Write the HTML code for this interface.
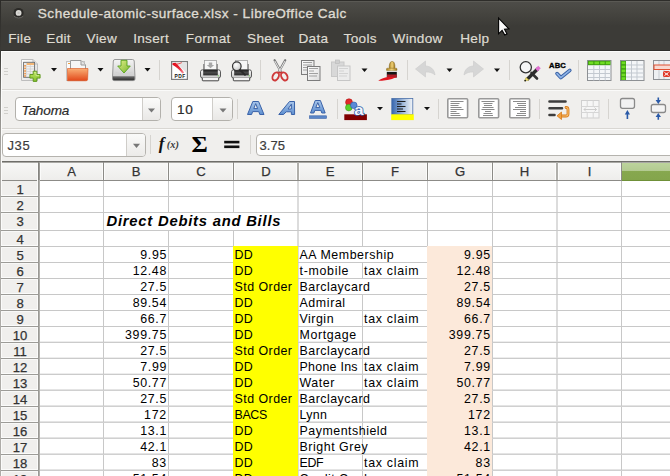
<!DOCTYPE html><html><head><meta charset="utf-8"><style>
*{margin:0;padding:0;box-sizing:border-box}
html,body{width:670px;height:476px;overflow:hidden;background:#f0efed;font-family:"Liberation Sans",sans-serif}
#root{position:relative;width:670px;height:476px;overflow:hidden}
.a{position:absolute}
.c{position:absolute;font-size:12.4px;line-height:0;white-space:nowrap;color:#000}
.ct{position:absolute;font-size:14.8px;font-weight:bold;font-style:italic;line-height:0;white-space:nowrap;color:#000;letter-spacing:0.77px}
.hd{position:absolute;font-size:13.1px;line-height:0;white-space:nowrap;color:#333;text-align:center;-webkit-text-stroke:0.25px}
.mn{position:absolute;font-size:13.6px;line-height:0;white-space:nowrap;color:#dfdbd2;letter-spacing:0.3px;-webkit-text-stroke:0.2px}
</style></head><body><div id="root">

<div class="a" style="left:0;top:0;width:670px;height:51px;background:linear-gradient(#4e4d49 1px,#45443f 14px,#3c3b37 26px,#3c3b37)"></div>
<div class="a" style="left:0;top:0;width:670px;height:1px;background:#2e2d2a"></div>
<div class="a" style="left:0;top:1px;width:670px;height:1px;background:#5a5954"></div>
<div class="a" style="left:0;top:50px;width:670px;height:1px;background:#2f2e2b"></div>
<div class="mn" style="left:37.8px;top:13.69px;letter-spacing:0.49px;-webkit-text-stroke:0.35px">Schedule-atomic-surface.xlsx - LibreOffice Calc</div>
<div class="mn" style="left:8.2px;top:39.49px">File</div>
<div class="mn" style="left:46.3px;top:39.49px">Edit</div>
<div class="mn" style="left:86.6px;top:39.49px">View</div>
<div class="mn" style="left:133.2px;top:39.49px">Insert</div>
<div class="mn" style="left:185.8px;top:39.49px">Format</div>
<div class="mn" style="left:247.1px;top:39.49px">Sheet</div>
<div class="mn" style="left:298.5px;top:39.49px">Data</div>
<div class="mn" style="left:343.6px;top:39.49px">Tools</div>
<div class="mn" style="left:392.5px;top:39.49px">Window</div>
<div class="mn" style="left:460.2px;top:39.49px">Help</div>
<div class="a" style="left:0;top:51px;width:670px;height:110px;background:#f0efed"></div>
<div class="a" style="left:1px;top:51px;width:669px;height:1px;background:#fbfbfa"></div>
<div style="position:absolute;left:0px;top:89px;width:670px;height:1px;background:#d9d7d3"></div>
<div style="position:absolute;left:0px;top:90px;width:670px;height:1px;background:#fafaf9"></div>
<div style="position:absolute;left:0px;top:128px;width:670px;height:1px;background:#d9d7d3"></div>
<div style="position:absolute;left:0px;top:129px;width:670px;height:1px;background:#fafaf9"></div>
<div class="a" style="left:2px;top:133px;width:144px;height:24px;border:1px solid #b5b3ae;border-radius:4px;background:#fff"></div>
<div class="a" style="left:126px;top:134px;width:19px;height:22px;border-left:1px solid #cfcdc9;border-radius:0 3px 3px 0;background:linear-gradient(#fafaf9,#ecebe9)"></div>
<div class="mn" style="left:7.4px;top:145.50px;color:#3c3c3c;font-size:13px;letter-spacing:0.7px">J35</div>
<div class="a" style="left:256px;top:134px;width:420px;height:22px;border:1px solid #b5b3ae;border-radius:4px;background:#fff"></div>
<div class="mn" style="left:259.5px;top:145.70px;color:#3c3c3c;font-size:13px;letter-spacing:0.1px">3.75</div>
<div style="position:absolute;left:0px;top:161px;width:670px;height:1px;background:#6f6e6a"></div>
<div style="position:absolute;left:0px;top:162px;width:670px;height:1px;background:#a9a8a4"></div>
<div class="a" style="left:0;top:163px;width:670px;height:17px;background:linear-gradient(#f7f7f6,#eeedeb)"></div>
<div class="a" style="left:0;top:181px;width:38px;height:295px;background:#f0efed"></div>
<div style="position:absolute;left:0px;top:180px;width:670px;height:1px;background:#8c8b87"></div>
<div style="position:absolute;left:38px;top:162px;width:1px;height:314px;background:#9a9995"></div>
<div style="position:absolute;left:39px;top:162px;width:1px;height:314px;background:#b2b1ad"></div>
<div style="position:absolute;left:37px;top:163px;width:1px;height:313px;background:#fbfbfa"></div>
<div class="a" style="left:0;top:0;width:1px;height:476px;background:linear-gradient(#2c2b28,#3c3b37 55px,#8a8985 100px,#aeaca8 160px,#aeaca8)"></div>
<div class="a" style="left:1px;top:51px;width:1px;height:425px;background:#fbfbfa"></div>
<div style="position:absolute;left:40px;top:181px;width:630px;height:295px;background:#fff"></div>
<div style="position:absolute;left:233px;top:246px;width:65px;height:230px;background:#ffff00"></div>
<div style="position:absolute;left:427px;top:246px;width:65px;height:230px;background:#fce9da"></div>
<div style="position:absolute;left:40px;top:196px;width:630px;height:1px;background:#c8c8c8"></div>
<div style="position:absolute;left:40px;top:212px;width:630px;height:1px;background:#c8c8c8"></div>
<div style="position:absolute;left:40px;top:230px;width:630px;height:1px;background:#c8c8c8"></div>
<div style="position:absolute;left:40px;top:246px;width:193px;height:1px;background:#c8c8c8"></div>
<div style="position:absolute;left:298px;top:246px;width:129px;height:1px;background:#c8c8c8"></div>
<div style="position:absolute;left:492px;top:246px;width:178px;height:1px;background:#c8c8c8"></div>
<div style="position:absolute;left:40px;top:262px;width:193px;height:1px;background:#c8c8c8"></div>
<div style="position:absolute;left:298px;top:262px;width:129px;height:1px;background:#c8c8c8"></div>
<div style="position:absolute;left:492px;top:262px;width:178px;height:1px;background:#c8c8c8"></div>
<div style="position:absolute;left:40px;top:278px;width:193px;height:1px;background:#c8c8c8"></div>
<div style="position:absolute;left:298px;top:278px;width:129px;height:1px;background:#c8c8c8"></div>
<div style="position:absolute;left:492px;top:278px;width:178px;height:1px;background:#c8c8c8"></div>
<div style="position:absolute;left:40px;top:294px;width:193px;height:1px;background:#c8c8c8"></div>
<div style="position:absolute;left:298px;top:294px;width:129px;height:1px;background:#c8c8c8"></div>
<div style="position:absolute;left:492px;top:294px;width:178px;height:1px;background:#c8c8c8"></div>
<div style="position:absolute;left:40px;top:310px;width:193px;height:1px;background:#c8c8c8"></div>
<div style="position:absolute;left:298px;top:310px;width:129px;height:1px;background:#c8c8c8"></div>
<div style="position:absolute;left:492px;top:310px;width:178px;height:1px;background:#c8c8c8"></div>
<div style="position:absolute;left:40px;top:326px;width:193px;height:1px;background:#c8c8c8"></div>
<div style="position:absolute;left:298px;top:326px;width:129px;height:1px;background:#c8c8c8"></div>
<div style="position:absolute;left:492px;top:326px;width:178px;height:1px;background:#c8c8c8"></div>
<div style="position:absolute;left:40px;top:341px;width:193px;height:1px;background:#ededed"></div>
<div style="position:absolute;left:40px;top:342px;width:193px;height:1px;background:#cbcbcb"></div>
<div style="position:absolute;left:298px;top:341px;width:129px;height:1px;background:#ededed"></div>
<div style="position:absolute;left:298px;top:342px;width:129px;height:1px;background:#cbcbcb"></div>
<div style="position:absolute;left:492px;top:341px;width:178px;height:1px;background:#ededed"></div>
<div style="position:absolute;left:492px;top:342px;width:178px;height:1px;background:#cbcbcb"></div>
<div style="position:absolute;left:40px;top:357px;width:193px;height:1px;background:#ededed"></div>
<div style="position:absolute;left:40px;top:358px;width:193px;height:1px;background:#cbcbcb"></div>
<div style="position:absolute;left:298px;top:357px;width:129px;height:1px;background:#ededed"></div>
<div style="position:absolute;left:298px;top:358px;width:129px;height:1px;background:#cbcbcb"></div>
<div style="position:absolute;left:492px;top:357px;width:178px;height:1px;background:#ededed"></div>
<div style="position:absolute;left:492px;top:358px;width:178px;height:1px;background:#cbcbcb"></div>
<div style="position:absolute;left:40px;top:373px;width:193px;height:1px;background:#ededed"></div>
<div style="position:absolute;left:40px;top:374px;width:193px;height:1px;background:#cbcbcb"></div>
<div style="position:absolute;left:298px;top:373px;width:129px;height:1px;background:#ededed"></div>
<div style="position:absolute;left:298px;top:374px;width:129px;height:1px;background:#cbcbcb"></div>
<div style="position:absolute;left:492px;top:373px;width:178px;height:1px;background:#ededed"></div>
<div style="position:absolute;left:492px;top:374px;width:178px;height:1px;background:#cbcbcb"></div>
<div style="position:absolute;left:40px;top:389px;width:193px;height:1px;background:#e4e4e4"></div>
<div style="position:absolute;left:40px;top:390px;width:193px;height:1px;background:#d0d0d0"></div>
<div style="position:absolute;left:298px;top:389px;width:129px;height:1px;background:#e4e4e4"></div>
<div style="position:absolute;left:298px;top:390px;width:129px;height:1px;background:#d0d0d0"></div>
<div style="position:absolute;left:492px;top:389px;width:178px;height:1px;background:#e4e4e4"></div>
<div style="position:absolute;left:492px;top:390px;width:178px;height:1px;background:#d0d0d0"></div>
<div style="position:absolute;left:40px;top:405px;width:193px;height:1px;background:#e4e4e4"></div>
<div style="position:absolute;left:40px;top:406px;width:193px;height:1px;background:#d0d0d0"></div>
<div style="position:absolute;left:298px;top:405px;width:129px;height:1px;background:#e4e4e4"></div>
<div style="position:absolute;left:298px;top:406px;width:129px;height:1px;background:#d0d0d0"></div>
<div style="position:absolute;left:492px;top:405px;width:178px;height:1px;background:#e4e4e4"></div>
<div style="position:absolute;left:492px;top:406px;width:178px;height:1px;background:#d0d0d0"></div>
<div style="position:absolute;left:40px;top:421px;width:193px;height:1px;background:#e4e4e4"></div>
<div style="position:absolute;left:40px;top:422px;width:193px;height:1px;background:#d0d0d0"></div>
<div style="position:absolute;left:298px;top:421px;width:129px;height:1px;background:#e4e4e4"></div>
<div style="position:absolute;left:298px;top:422px;width:129px;height:1px;background:#d0d0d0"></div>
<div style="position:absolute;left:492px;top:421px;width:178px;height:1px;background:#e4e4e4"></div>
<div style="position:absolute;left:492px;top:422px;width:178px;height:1px;background:#d0d0d0"></div>
<div style="position:absolute;left:40px;top:437px;width:193px;height:1px;background:#e4e4e4"></div>
<div style="position:absolute;left:40px;top:438px;width:193px;height:1px;background:#d0d0d0"></div>
<div style="position:absolute;left:298px;top:437px;width:129px;height:1px;background:#e4e4e4"></div>
<div style="position:absolute;left:298px;top:438px;width:129px;height:1px;background:#d0d0d0"></div>
<div style="position:absolute;left:492px;top:437px;width:178px;height:1px;background:#e4e4e4"></div>
<div style="position:absolute;left:492px;top:438px;width:178px;height:1px;background:#d0d0d0"></div>
<div style="position:absolute;left:40px;top:453px;width:193px;height:1px;background:#e4e4e4"></div>
<div style="position:absolute;left:40px;top:454px;width:193px;height:1px;background:#d0d0d0"></div>
<div style="position:absolute;left:298px;top:453px;width:129px;height:1px;background:#e4e4e4"></div>
<div style="position:absolute;left:298px;top:454px;width:129px;height:1px;background:#d0d0d0"></div>
<div style="position:absolute;left:492px;top:453px;width:178px;height:1px;background:#e4e4e4"></div>
<div style="position:absolute;left:492px;top:454px;width:178px;height:1px;background:#d0d0d0"></div>
<div style="position:absolute;left:40px;top:469px;width:193px;height:1px;background:#e4e4e4"></div>
<div style="position:absolute;left:40px;top:470px;width:193px;height:1px;background:#d0d0d0"></div>
<div style="position:absolute;left:298px;top:469px;width:129px;height:1px;background:#e4e4e4"></div>
<div style="position:absolute;left:298px;top:470px;width:129px;height:1px;background:#d0d0d0"></div>
<div style="position:absolute;left:492px;top:469px;width:178px;height:1px;background:#e4e4e4"></div>
<div style="position:absolute;left:492px;top:470px;width:178px;height:1px;background:#d0d0d0"></div>
<div style="position:absolute;left:103px;top:181px;width:1px;height:15px;background:#c8c8c8"></div>
<div style="position:absolute;left:103px;top:197px;width:1px;height:15px;background:#c8c8c8"></div>
<div style="position:absolute;left:103px;top:213px;width:1px;height:17px;background:#c8c8c8"></div>
<div style="position:absolute;left:103px;top:231px;width:1px;height:15px;background:#c8c8c8"></div>
<div style="position:absolute;left:103px;top:247px;width:1px;height:15px;background:#c8c8c8"></div>
<div style="position:absolute;left:103px;top:263px;width:1px;height:15px;background:#c8c8c8"></div>
<div style="position:absolute;left:103px;top:279px;width:1px;height:15px;background:#c8c8c8"></div>
<div style="position:absolute;left:103px;top:295px;width:1px;height:15px;background:#c8c8c8"></div>
<div style="position:absolute;left:103px;top:311px;width:1px;height:15px;background:#c8c8c8"></div>
<div style="position:absolute;left:103px;top:327px;width:1px;height:15px;background:#c8c8c8"></div>
<div style="position:absolute;left:103px;top:343px;width:1px;height:15px;background:#c8c8c8"></div>
<div style="position:absolute;left:103px;top:359px;width:1px;height:15px;background:#c8c8c8"></div>
<div style="position:absolute;left:103px;top:375px;width:1px;height:15px;background:#c8c8c8"></div>
<div style="position:absolute;left:103px;top:391px;width:1px;height:15px;background:#c8c8c8"></div>
<div style="position:absolute;left:103px;top:407px;width:1px;height:15px;background:#c8c8c8"></div>
<div style="position:absolute;left:103px;top:423px;width:1px;height:15px;background:#c8c8c8"></div>
<div style="position:absolute;left:103px;top:439px;width:1px;height:15px;background:#c8c8c8"></div>
<div style="position:absolute;left:103px;top:455px;width:1px;height:15px;background:#c8c8c8"></div>
<div style="position:absolute;left:103px;top:471px;width:1px;height:5px;background:#c8c8c8"></div>
<div style="position:absolute;left:168px;top:181px;width:1px;height:15px;background:#c8c8c8"></div>
<div style="position:absolute;left:168px;top:197px;width:1px;height:15px;background:#c8c8c8"></div>
<div style="position:absolute;left:168px;top:231px;width:1px;height:15px;background:#c8c8c8"></div>
<div style="position:absolute;left:168px;top:247px;width:1px;height:15px;background:#c8c8c8"></div>
<div style="position:absolute;left:168px;top:263px;width:1px;height:15px;background:#c8c8c8"></div>
<div style="position:absolute;left:168px;top:279px;width:1px;height:15px;background:#c8c8c8"></div>
<div style="position:absolute;left:168px;top:295px;width:1px;height:15px;background:#c8c8c8"></div>
<div style="position:absolute;left:168px;top:311px;width:1px;height:15px;background:#c8c8c8"></div>
<div style="position:absolute;left:168px;top:327px;width:1px;height:15px;background:#c8c8c8"></div>
<div style="position:absolute;left:168px;top:343px;width:1px;height:15px;background:#c8c8c8"></div>
<div style="position:absolute;left:168px;top:359px;width:1px;height:15px;background:#c8c8c8"></div>
<div style="position:absolute;left:168px;top:375px;width:1px;height:15px;background:#c8c8c8"></div>
<div style="position:absolute;left:168px;top:391px;width:1px;height:15px;background:#c8c8c8"></div>
<div style="position:absolute;left:168px;top:407px;width:1px;height:15px;background:#c8c8c8"></div>
<div style="position:absolute;left:168px;top:423px;width:1px;height:15px;background:#c8c8c8"></div>
<div style="position:absolute;left:168px;top:439px;width:1px;height:15px;background:#c8c8c8"></div>
<div style="position:absolute;left:168px;top:455px;width:1px;height:15px;background:#c8c8c8"></div>
<div style="position:absolute;left:168px;top:471px;width:1px;height:5px;background:#c8c8c8"></div>
<div style="position:absolute;left:233px;top:181px;width:1px;height:15px;background:#c8c8c8"></div>
<div style="position:absolute;left:233px;top:197px;width:1px;height:15px;background:#c8c8c8"></div>
<div style="position:absolute;left:233px;top:231px;width:1px;height:15px;background:#c8c8c8"></div>
<div style="position:absolute;left:297px;top:181px;width:1px;height:15px;background:#dcdcdc"></div>
<div style="position:absolute;left:298px;top:181px;width:1px;height:15px;background:#dcdcdc"></div>
<div style="position:absolute;left:297px;top:197px;width:1px;height:15px;background:#dcdcdc"></div>
<div style="position:absolute;left:298px;top:197px;width:1px;height:15px;background:#dcdcdc"></div>
<div style="position:absolute;left:297px;top:213px;width:1px;height:17px;background:#dcdcdc"></div>
<div style="position:absolute;left:298px;top:213px;width:1px;height:17px;background:#dcdcdc"></div>
<div style="position:absolute;left:297px;top:231px;width:1px;height:15px;background:#dcdcdc"></div>
<div style="position:absolute;left:298px;top:231px;width:1px;height:15px;background:#dcdcdc"></div>
<div style="position:absolute;left:298px;top:247px;width:1px;height:15px;background:#dcdcdc"></div>
<div style="position:absolute;left:298px;top:263px;width:1px;height:15px;background:#dcdcdc"></div>
<div style="position:absolute;left:298px;top:279px;width:1px;height:15px;background:#dcdcdc"></div>
<div style="position:absolute;left:298px;top:295px;width:1px;height:15px;background:#dcdcdc"></div>
<div style="position:absolute;left:298px;top:311px;width:1px;height:15px;background:#dcdcdc"></div>
<div style="position:absolute;left:298px;top:327px;width:1px;height:15px;background:#dcdcdc"></div>
<div style="position:absolute;left:298px;top:343px;width:1px;height:15px;background:#dcdcdc"></div>
<div style="position:absolute;left:298px;top:359px;width:1px;height:15px;background:#dcdcdc"></div>
<div style="position:absolute;left:298px;top:375px;width:1px;height:15px;background:#dcdcdc"></div>
<div style="position:absolute;left:298px;top:391px;width:1px;height:15px;background:#dcdcdc"></div>
<div style="position:absolute;left:298px;top:407px;width:1px;height:15px;background:#dcdcdc"></div>
<div style="position:absolute;left:298px;top:423px;width:1px;height:15px;background:#dcdcdc"></div>
<div style="position:absolute;left:298px;top:439px;width:1px;height:15px;background:#dcdcdc"></div>
<div style="position:absolute;left:298px;top:455px;width:1px;height:15px;background:#dcdcdc"></div>
<div style="position:absolute;left:298px;top:471px;width:1px;height:5px;background:#dcdcdc"></div>
<div style="position:absolute;left:362px;top:181px;width:1px;height:15px;background:#c8c8c8"></div>
<div style="position:absolute;left:362px;top:197px;width:1px;height:15px;background:#c8c8c8"></div>
<div style="position:absolute;left:362px;top:213px;width:1px;height:17px;background:#c8c8c8"></div>
<div style="position:absolute;left:362px;top:231px;width:1px;height:15px;background:#c8c8c8"></div>
<div style="position:absolute;left:362px;top:263px;width:1px;height:15px;background:#c8c8c8"></div>
<div style="position:absolute;left:362px;top:295px;width:1px;height:15px;background:#c8c8c8"></div>
<div style="position:absolute;left:362px;top:311px;width:1px;height:15px;background:#c8c8c8"></div>
<div style="position:absolute;left:362px;top:327px;width:1px;height:15px;background:#c8c8c8"></div>
<div style="position:absolute;left:362px;top:343px;width:1px;height:15px;background:#c8c8c8"></div>
<div style="position:absolute;left:362px;top:359px;width:1px;height:15px;background:#c8c8c8"></div>
<div style="position:absolute;left:362px;top:375px;width:1px;height:15px;background:#c8c8c8"></div>
<div style="position:absolute;left:362px;top:391px;width:1px;height:15px;background:#c8c8c8"></div>
<div style="position:absolute;left:362px;top:407px;width:1px;height:15px;background:#c8c8c8"></div>
<div style="position:absolute;left:362px;top:423px;width:1px;height:15px;background:#c8c8c8"></div>
<div style="position:absolute;left:362px;top:439px;width:1px;height:15px;background:#c8c8c8"></div>
<div style="position:absolute;left:362px;top:455px;width:1px;height:15px;background:#c8c8c8"></div>
<div style="position:absolute;left:362px;top:471px;width:1px;height:5px;background:#c8c8c8"></div>
<div style="position:absolute;left:427px;top:181px;width:1px;height:15px;background:#c8c8c8"></div>
<div style="position:absolute;left:427px;top:197px;width:1px;height:15px;background:#c8c8c8"></div>
<div style="position:absolute;left:427px;top:213px;width:1px;height:17px;background:#c8c8c8"></div>
<div style="position:absolute;left:427px;top:231px;width:1px;height:15px;background:#c8c8c8"></div>
<div style="position:absolute;left:492px;top:181px;width:1px;height:15px;background:#c8c8c8"></div>
<div style="position:absolute;left:492px;top:197px;width:1px;height:15px;background:#c8c8c8"></div>
<div style="position:absolute;left:492px;top:213px;width:1px;height:17px;background:#c8c8c8"></div>
<div style="position:absolute;left:492px;top:231px;width:1px;height:15px;background:#c8c8c8"></div>
<div style="position:absolute;left:492px;top:247px;width:1px;height:15px;background:#c8c8c8"></div>
<div style="position:absolute;left:492px;top:263px;width:1px;height:15px;background:#c8c8c8"></div>
<div style="position:absolute;left:492px;top:279px;width:1px;height:15px;background:#c8c8c8"></div>
<div style="position:absolute;left:492px;top:295px;width:1px;height:15px;background:#c8c8c8"></div>
<div style="position:absolute;left:492px;top:311px;width:1px;height:15px;background:#c8c8c8"></div>
<div style="position:absolute;left:492px;top:327px;width:1px;height:15px;background:#c8c8c8"></div>
<div style="position:absolute;left:492px;top:343px;width:1px;height:15px;background:#c8c8c8"></div>
<div style="position:absolute;left:492px;top:359px;width:1px;height:15px;background:#c8c8c8"></div>
<div style="position:absolute;left:492px;top:375px;width:1px;height:15px;background:#c8c8c8"></div>
<div style="position:absolute;left:492px;top:391px;width:1px;height:15px;background:#c8c8c8"></div>
<div style="position:absolute;left:492px;top:407px;width:1px;height:15px;background:#c8c8c8"></div>
<div style="position:absolute;left:492px;top:423px;width:1px;height:15px;background:#c8c8c8"></div>
<div style="position:absolute;left:492px;top:439px;width:1px;height:15px;background:#c8c8c8"></div>
<div style="position:absolute;left:492px;top:455px;width:1px;height:15px;background:#c8c8c8"></div>
<div style="position:absolute;left:492px;top:471px;width:1px;height:5px;background:#c8c8c8"></div>
<div style="position:absolute;left:556px;top:181px;width:1px;height:15px;background:#dcdcdc"></div>
<div style="position:absolute;left:557px;top:181px;width:1px;height:15px;background:#dcdcdc"></div>
<div style="position:absolute;left:556px;top:197px;width:1px;height:15px;background:#dcdcdc"></div>
<div style="position:absolute;left:557px;top:197px;width:1px;height:15px;background:#dcdcdc"></div>
<div style="position:absolute;left:556px;top:213px;width:1px;height:17px;background:#dcdcdc"></div>
<div style="position:absolute;left:557px;top:213px;width:1px;height:17px;background:#dcdcdc"></div>
<div style="position:absolute;left:556px;top:231px;width:1px;height:15px;background:#dcdcdc"></div>
<div style="position:absolute;left:557px;top:231px;width:1px;height:15px;background:#dcdcdc"></div>
<div style="position:absolute;left:556px;top:247px;width:1px;height:15px;background:#dcdcdc"></div>
<div style="position:absolute;left:557px;top:247px;width:1px;height:15px;background:#dcdcdc"></div>
<div style="position:absolute;left:556px;top:263px;width:1px;height:15px;background:#dcdcdc"></div>
<div style="position:absolute;left:557px;top:263px;width:1px;height:15px;background:#dcdcdc"></div>
<div style="position:absolute;left:556px;top:279px;width:1px;height:15px;background:#dcdcdc"></div>
<div style="position:absolute;left:557px;top:279px;width:1px;height:15px;background:#dcdcdc"></div>
<div style="position:absolute;left:556px;top:295px;width:1px;height:15px;background:#dcdcdc"></div>
<div style="position:absolute;left:557px;top:295px;width:1px;height:15px;background:#dcdcdc"></div>
<div style="position:absolute;left:556px;top:311px;width:1px;height:15px;background:#dcdcdc"></div>
<div style="position:absolute;left:557px;top:311px;width:1px;height:15px;background:#dcdcdc"></div>
<div style="position:absolute;left:556px;top:327px;width:1px;height:15px;background:#dcdcdc"></div>
<div style="position:absolute;left:557px;top:327px;width:1px;height:15px;background:#dcdcdc"></div>
<div style="position:absolute;left:556px;top:343px;width:1px;height:15px;background:#dcdcdc"></div>
<div style="position:absolute;left:557px;top:343px;width:1px;height:15px;background:#dcdcdc"></div>
<div style="position:absolute;left:556px;top:359px;width:1px;height:15px;background:#dcdcdc"></div>
<div style="position:absolute;left:557px;top:359px;width:1px;height:15px;background:#dcdcdc"></div>
<div style="position:absolute;left:556px;top:375px;width:1px;height:15px;background:#dcdcdc"></div>
<div style="position:absolute;left:557px;top:375px;width:1px;height:15px;background:#dcdcdc"></div>
<div style="position:absolute;left:556px;top:391px;width:1px;height:15px;background:#dcdcdc"></div>
<div style="position:absolute;left:557px;top:391px;width:1px;height:15px;background:#dcdcdc"></div>
<div style="position:absolute;left:556px;top:407px;width:1px;height:15px;background:#dcdcdc"></div>
<div style="position:absolute;left:557px;top:407px;width:1px;height:15px;background:#dcdcdc"></div>
<div style="position:absolute;left:556px;top:423px;width:1px;height:15px;background:#dcdcdc"></div>
<div style="position:absolute;left:557px;top:423px;width:1px;height:15px;background:#dcdcdc"></div>
<div style="position:absolute;left:556px;top:439px;width:1px;height:15px;background:#dcdcdc"></div>
<div style="position:absolute;left:557px;top:439px;width:1px;height:15px;background:#dcdcdc"></div>
<div style="position:absolute;left:556px;top:455px;width:1px;height:15px;background:#dcdcdc"></div>
<div style="position:absolute;left:557px;top:455px;width:1px;height:15px;background:#dcdcdc"></div>
<div style="position:absolute;left:556px;top:471px;width:1px;height:5px;background:#dcdcdc"></div>
<div style="position:absolute;left:557px;top:471px;width:1px;height:5px;background:#dcdcdc"></div>
<div style="position:absolute;left:621px;top:181px;width:1px;height:15px;background:#c8c8c8"></div>
<div style="position:absolute;left:621px;top:197px;width:1px;height:15px;background:#c8c8c8"></div>
<div style="position:absolute;left:621px;top:213px;width:1px;height:17px;background:#c8c8c8"></div>
<div style="position:absolute;left:621px;top:231px;width:1px;height:15px;background:#c8c8c8"></div>
<div style="position:absolute;left:621px;top:247px;width:1px;height:15px;background:#c8c8c8"></div>
<div style="position:absolute;left:621px;top:263px;width:1px;height:15px;background:#c8c8c8"></div>
<div style="position:absolute;left:621px;top:279px;width:1px;height:15px;background:#c8c8c8"></div>
<div style="position:absolute;left:621px;top:295px;width:1px;height:15px;background:#c8c8c8"></div>
<div style="position:absolute;left:621px;top:311px;width:1px;height:15px;background:#c8c8c8"></div>
<div style="position:absolute;left:621px;top:327px;width:1px;height:15px;background:#c8c8c8"></div>
<div style="position:absolute;left:621px;top:343px;width:1px;height:15px;background:#c8c8c8"></div>
<div style="position:absolute;left:621px;top:359px;width:1px;height:15px;background:#c8c8c8"></div>
<div style="position:absolute;left:621px;top:375px;width:1px;height:15px;background:#c8c8c8"></div>
<div style="position:absolute;left:621px;top:391px;width:1px;height:15px;background:#c8c8c8"></div>
<div style="position:absolute;left:621px;top:407px;width:1px;height:15px;background:#c8c8c8"></div>
<div style="position:absolute;left:621px;top:423px;width:1px;height:15px;background:#c8c8c8"></div>
<div style="position:absolute;left:621px;top:439px;width:1px;height:15px;background:#c8c8c8"></div>
<div style="position:absolute;left:621px;top:455px;width:1px;height:15px;background:#c8c8c8"></div>
<div style="position:absolute;left:621px;top:471px;width:1px;height:5px;background:#c8c8c8"></div>
<div style="position:absolute;left:103px;top:162px;width:1px;height:18px;background:#8c8b87"></div>
<div style="position:absolute;left:102px;top:163px;width:1px;height:17px;background:#fbfbfa"></div>
<div style="position:absolute;left:104px;top:163px;width:1px;height:17px;background:#fbfbfa"></div>
<div style="position:absolute;left:168px;top:162px;width:1px;height:18px;background:#8c8b87"></div>
<div style="position:absolute;left:167px;top:163px;width:1px;height:17px;background:#fbfbfa"></div>
<div style="position:absolute;left:169px;top:163px;width:1px;height:17px;background:#fbfbfa"></div>
<div style="position:absolute;left:233px;top:162px;width:1px;height:18px;background:#8c8b87"></div>
<div style="position:absolute;left:232px;top:163px;width:1px;height:17px;background:#fbfbfa"></div>
<div style="position:absolute;left:234px;top:163px;width:1px;height:17px;background:#fbfbfa"></div>
<div style="position:absolute;left:297px;top:162px;width:1px;height:18px;background:#b0afab"></div>
<div style="position:absolute;left:298px;top:162px;width:1px;height:18px;background:#b0afab"></div>
<div style="position:absolute;left:296px;top:163px;width:1px;height:17px;background:#fbfbfa"></div>
<div style="position:absolute;left:299px;top:163px;width:1px;height:17px;background:#fbfbfa"></div>
<div style="position:absolute;left:362px;top:162px;width:1px;height:18px;background:#8c8b87"></div>
<div style="position:absolute;left:361px;top:163px;width:1px;height:17px;background:#fbfbfa"></div>
<div style="position:absolute;left:363px;top:163px;width:1px;height:17px;background:#fbfbfa"></div>
<div style="position:absolute;left:427px;top:162px;width:1px;height:18px;background:#8c8b87"></div>
<div style="position:absolute;left:426px;top:163px;width:1px;height:17px;background:#fbfbfa"></div>
<div style="position:absolute;left:428px;top:163px;width:1px;height:17px;background:#fbfbfa"></div>
<div style="position:absolute;left:492px;top:162px;width:1px;height:18px;background:#8c8b87"></div>
<div style="position:absolute;left:491px;top:163px;width:1px;height:17px;background:#fbfbfa"></div>
<div style="position:absolute;left:493px;top:163px;width:1px;height:17px;background:#fbfbfa"></div>
<div style="position:absolute;left:556px;top:162px;width:1px;height:18px;background:#b0afab"></div>
<div style="position:absolute;left:557px;top:162px;width:1px;height:18px;background:#b0afab"></div>
<div style="position:absolute;left:555px;top:163px;width:1px;height:17px;background:#fbfbfa"></div>
<div style="position:absolute;left:558px;top:163px;width:1px;height:17px;background:#fbfbfa"></div>
<div style="position:absolute;left:621px;top:162px;width:1px;height:18px;background:#8c8b87"></div>
<div style="position:absolute;left:620px;top:163px;width:1px;height:17px;background:#fbfbfa"></div>
<div style="position:absolute;left:622px;top:163px;width:1px;height:17px;background:#fbfbfa"></div>
<div style="position:absolute;left:40px;top:163px;width:1px;height:17px;background:#fbfbfa"></div>
<div style="position:absolute;left:38px;top:162px;width:1px;height:18px;background:#858480"></div>
<div style="position:absolute;left:39px;top:162px;width:1px;height:18px;background:#9c9b97"></div>
<div class="a" style="left:622px;top:163px;width:48px;height:17px;background:linear-gradient(#bcd39c 0,#b3ca91 8px,#87a84f 8px,#84a54c)"></div>
<div style="position:absolute;left:622px;top:180px;width:48px;height:1px;background:#6f9038"></div>
<div class="hd" style="left:40px;width:63px;top:172.23px">A</div>
<div class="hd" style="left:104px;width:64px;top:172.23px">B</div>
<div class="hd" style="left:169px;width:64px;top:172.23px">C</div>
<div class="hd" style="left:234px;width:64px;top:172.23px">D</div>
<div class="hd" style="left:298px;width:64px;top:172.23px">E</div>
<div class="hd" style="left:363px;width:64px;top:172.23px">F</div>
<div class="hd" style="left:428px;width:64px;top:172.23px">G</div>
<div class="hd" style="left:493px;width:63px;top:172.23px">H</div>
<div class="hd" style="left:558px;width:63px;top:172.23px">I</div>
<div class="hd" style="left:1.6px;width:37px;top:189.63px">1</div>
<div class="hd" style="left:1.6px;width:37px;top:205.63px">2</div>
<div class="hd" style="left:1.6px;width:37px;top:221.63px">3</div>
<div class="hd" style="left:1.6px;width:37px;top:239.63px">4</div>
<div class="hd" style="left:1.6px;width:37px;top:255.63px">5</div>
<div class="hd" style="left:1.6px;width:37px;top:271.63px">6</div>
<div class="hd" style="left:1.6px;width:37px;top:287.63px">7</div>
<div class="hd" style="left:1.6px;width:37px;top:303.63px">8</div>
<div class="hd" style="left:1.6px;width:37px;top:319.63px">9</div>
<div class="hd" style="left:1.6px;width:37px;top:335.63px">10</div>
<div class="hd" style="left:1.6px;width:37px;top:351.63px">11</div>
<div class="hd" style="left:1.6px;width:37px;top:367.63px">12</div>
<div class="hd" style="left:1.6px;width:37px;top:383.63px">13</div>
<div class="hd" style="left:1.6px;width:37px;top:399.63px">14</div>
<div class="hd" style="left:1.6px;width:37px;top:415.63px">15</div>
<div class="hd" style="left:1.6px;width:37px;top:431.63px">16</div>
<div class="hd" style="left:1.6px;width:37px;top:447.63px">17</div>
<div class="hd" style="left:1.6px;width:37px;top:463.63px">18</div>
<div class="hd" style="left:1.6px;width:37px;top:479.63px">19</div>
<div style="position:absolute;left:1px;top:195px;width:37px;height:1px;background:#fbfbfa"></div>
<div style="position:absolute;left:1px;top:197px;width:37px;height:1px;background:#f8f8f7"></div>
<div style="position:absolute;left:1px;top:196px;width:37px;height:1px;background:#9c9b97"></div>
<div style="position:absolute;left:1px;top:211px;width:37px;height:1px;background:#fbfbfa"></div>
<div style="position:absolute;left:1px;top:213px;width:37px;height:1px;background:#f8f8f7"></div>
<div style="position:absolute;left:1px;top:212px;width:37px;height:1px;background:#9c9b97"></div>
<div style="position:absolute;left:1px;top:229px;width:37px;height:1px;background:#fbfbfa"></div>
<div style="position:absolute;left:1px;top:231px;width:37px;height:1px;background:#f8f8f7"></div>
<div style="position:absolute;left:1px;top:230px;width:37px;height:1px;background:#9c9b97"></div>
<div style="position:absolute;left:1px;top:245px;width:37px;height:1px;background:#fbfbfa"></div>
<div style="position:absolute;left:1px;top:247px;width:37px;height:1px;background:#f8f8f7"></div>
<div style="position:absolute;left:1px;top:246px;width:37px;height:1px;background:#9c9b97"></div>
<div style="position:absolute;left:1px;top:261px;width:37px;height:1px;background:#fbfbfa"></div>
<div style="position:absolute;left:1px;top:263px;width:37px;height:1px;background:#f8f8f7"></div>
<div style="position:absolute;left:1px;top:262px;width:37px;height:1px;background:#9c9b97"></div>
<div style="position:absolute;left:1px;top:277px;width:37px;height:1px;background:#fbfbfa"></div>
<div style="position:absolute;left:1px;top:279px;width:37px;height:1px;background:#f8f8f7"></div>
<div style="position:absolute;left:1px;top:278px;width:37px;height:1px;background:#9c9b97"></div>
<div style="position:absolute;left:1px;top:293px;width:37px;height:1px;background:#fbfbfa"></div>
<div style="position:absolute;left:1px;top:295px;width:37px;height:1px;background:#f8f8f7"></div>
<div style="position:absolute;left:1px;top:294px;width:37px;height:1px;background:#9c9b97"></div>
<div style="position:absolute;left:1px;top:309px;width:37px;height:1px;background:#fbfbfa"></div>
<div style="position:absolute;left:1px;top:311px;width:37px;height:1px;background:#f8f8f7"></div>
<div style="position:absolute;left:1px;top:310px;width:37px;height:1px;background:#9c9b97"></div>
<div style="position:absolute;left:1px;top:325px;width:37px;height:1px;background:#fbfbfa"></div>
<div style="position:absolute;left:1px;top:327px;width:37px;height:1px;background:#f8f8f7"></div>
<div style="position:absolute;left:1px;top:326px;width:37px;height:1px;background:#9c9b97"></div>
<div style="position:absolute;left:1px;top:341px;width:37px;height:1px;background:#fbfbfa"></div>
<div style="position:absolute;left:1px;top:343px;width:37px;height:1px;background:#f8f8f7"></div>
<div style="position:absolute;left:1px;top:342px;width:37px;height:1px;background:#9c9b97"></div>
<div style="position:absolute;left:1px;top:357px;width:37px;height:1px;background:#fbfbfa"></div>
<div style="position:absolute;left:1px;top:359px;width:37px;height:1px;background:#f8f8f7"></div>
<div style="position:absolute;left:1px;top:358px;width:37px;height:1px;background:#9c9b97"></div>
<div style="position:absolute;left:1px;top:373px;width:37px;height:1px;background:#fbfbfa"></div>
<div style="position:absolute;left:1px;top:375px;width:37px;height:1px;background:#f8f8f7"></div>
<div style="position:absolute;left:1px;top:374px;width:37px;height:1px;background:#9c9b97"></div>
<div style="position:absolute;left:1px;top:389px;width:37px;height:1px;background:#fbfbfa"></div>
<div style="position:absolute;left:1px;top:391px;width:37px;height:1px;background:#f8f8f7"></div>
<div style="position:absolute;left:1px;top:390px;width:37px;height:1px;background:#9c9b97"></div>
<div style="position:absolute;left:1px;top:405px;width:37px;height:1px;background:#fbfbfa"></div>
<div style="position:absolute;left:1px;top:407px;width:37px;height:1px;background:#f8f8f7"></div>
<div style="position:absolute;left:1px;top:406px;width:37px;height:1px;background:#9c9b97"></div>
<div style="position:absolute;left:1px;top:421px;width:37px;height:1px;background:#fbfbfa"></div>
<div style="position:absolute;left:1px;top:423px;width:37px;height:1px;background:#f8f8f7"></div>
<div style="position:absolute;left:1px;top:422px;width:37px;height:1px;background:#9c9b97"></div>
<div style="position:absolute;left:1px;top:437px;width:37px;height:1px;background:#fbfbfa"></div>
<div style="position:absolute;left:1px;top:439px;width:37px;height:1px;background:#f8f8f7"></div>
<div style="position:absolute;left:1px;top:438px;width:37px;height:1px;background:#9c9b97"></div>
<div style="position:absolute;left:1px;top:453px;width:37px;height:1px;background:#fbfbfa"></div>
<div style="position:absolute;left:1px;top:455px;width:37px;height:1px;background:#f8f8f7"></div>
<div style="position:absolute;left:1px;top:454px;width:37px;height:1px;background:#9c9b97"></div>
<div style="position:absolute;left:1px;top:469px;width:37px;height:1px;background:#fbfbfa"></div>
<div style="position:absolute;left:1px;top:471px;width:37px;height:1px;background:#f8f8f7"></div>
<div style="position:absolute;left:1px;top:470px;width:37px;height:1px;background:#9c9b97"></div>
<div class="ct" style="left:106.5px;top:221.08px">Direct Debits and Bills</div>
<div class="c" style="left:140.28px;top:254.70px;letter-spacing:0.646px">9.95</div>
<div class="c" style="left:234.60px;top:254.70px;letter-spacing:0.285px">DD</div>
<div class="c" style="left:299.50px;top:254.70px;letter-spacing:0.554px">AA Membership</div>
<div class="c" style="left:464.08px;top:254.70px;letter-spacing:0.646px">9.95</div>
<div class="c" style="left:132.64px;top:270.70px;letter-spacing:0.665px">12.48</div>
<div class="c" style="left:234.60px;top:270.70px;letter-spacing:0.285px">DD</div>
<div class="c" style="left:299.50px;top:270.70px;letter-spacing:0.704px">t-mobile</div>
<div class="c" style="left:364.00px;top:270.70px;letter-spacing:0.707px">tax claim</div>
<div class="c" style="left:456.44px;top:270.70px;letter-spacing:0.665px">12.48</div>
<div class="c" style="left:140.28px;top:286.70px;letter-spacing:0.646px">27.5</div>
<div class="c" style="left:234.60px;top:286.70px;letter-spacing:0.456px">Std Order</div>
<div class="c" style="left:299.50px;top:286.70px;letter-spacing:0.497px">Barclaycard</div>
<div class="c" style="left:464.08px;top:286.70px;letter-spacing:0.646px">27.5</div>
<div class="c" style="left:132.64px;top:302.70px;letter-spacing:0.665px">89.54</div>
<div class="c" style="left:234.60px;top:302.70px;letter-spacing:0.285px">DD</div>
<div class="c" style="left:299.50px;top:302.70px;letter-spacing:0.604px">Admiral</div>
<div class="c" style="left:456.44px;top:302.70px;letter-spacing:0.665px">89.54</div>
<div class="c" style="left:140.28px;top:318.70px;letter-spacing:0.646px">66.7</div>
<div class="c" style="left:234.60px;top:318.70px;letter-spacing:0.285px">DD</div>
<div class="c" style="left:299.50px;top:318.70px;letter-spacing:0.513px">Virgin</div>
<div class="c" style="left:364.00px;top:318.70px;letter-spacing:0.707px">tax claim</div>
<div class="c" style="left:464.08px;top:318.70px;letter-spacing:0.646px">66.7</div>
<div class="c" style="left:125.01px;top:334.70px;letter-spacing:0.677px">399.75</div>
<div class="c" style="left:234.60px;top:334.70px;letter-spacing:0.285px">DD</div>
<div class="c" style="left:299.50px;top:334.70px;letter-spacing:0.615px">Mortgage</div>
<div class="c" style="left:448.81px;top:334.70px;letter-spacing:0.677px">399.75</div>
<div class="c" style="left:140.28px;top:350.70px;letter-spacing:0.646px">27.5</div>
<div class="c" style="left:234.60px;top:350.70px;letter-spacing:0.456px">Std Order</div>
<div class="c" style="left:299.50px;top:350.70px;letter-spacing:0.497px">Barclaycard</div>
<div class="c" style="left:464.08px;top:350.70px;letter-spacing:0.646px">27.5</div>
<div class="c" style="left:140.28px;top:366.70px;letter-spacing:0.646px">7.99</div>
<div class="c" style="left:234.60px;top:366.70px;letter-spacing:0.285px">DD</div>
<div class="c" style="left:299.50px;top:366.70px;letter-spacing:0.282px">Phone Ins</div>
<div class="c" style="left:364.00px;top:366.70px;letter-spacing:0.707px">tax claim</div>
<div class="c" style="left:464.08px;top:366.70px;letter-spacing:0.646px">7.99</div>
<div class="c" style="left:132.64px;top:382.70px;letter-spacing:0.665px">50.77</div>
<div class="c" style="left:234.60px;top:382.70px;letter-spacing:0.285px">DD</div>
<div class="c" style="left:299.50px;top:382.70px;letter-spacing:0.572px">Water</div>
<div class="c" style="left:364.00px;top:382.70px;letter-spacing:0.707px">tax claim</div>
<div class="c" style="left:456.44px;top:382.70px;letter-spacing:0.665px">50.77</div>
<div class="c" style="left:140.28px;top:398.70px;letter-spacing:0.646px">27.5</div>
<div class="c" style="left:234.60px;top:398.70px;letter-spacing:0.456px">Std Order</div>
<div class="c" style="left:299.50px;top:398.70px;letter-spacing:0.497px">Barclaycard</div>
<div class="c" style="left:464.08px;top:398.70px;letter-spacing:0.646px">27.5</div>
<div class="c" style="left:144.09px;top:414.70px;letter-spacing:0.738px">172</div>
<div class="c" style="left:234.60px;top:414.70px;letter-spacing:-0.385px">BACS</div>
<div class="c" style="left:299.50px;top:414.70px;letter-spacing:0.367px">Lynn</div>
<div class="c" style="left:467.89px;top:414.70px;letter-spacing:0.738px">172</div>
<div class="c" style="left:140.28px;top:430.70px;letter-spacing:0.646px">13.1</div>
<div class="c" style="left:234.60px;top:430.70px;letter-spacing:0.285px">DD</div>
<div class="c" style="left:299.50px;top:430.70px;letter-spacing:0.517px">Paymentshield</div>
<div class="c" style="left:464.08px;top:430.70px;letter-spacing:0.646px">13.1</div>
<div class="c" style="left:140.28px;top:446.70px;letter-spacing:0.646px">42.1</div>
<div class="c" style="left:234.60px;top:446.70px;letter-spacing:0.285px">DD</div>
<div class="c" style="left:299.50px;top:446.70px;letter-spacing:0.544px">Bright Grey</div>
<div class="c" style="left:464.08px;top:446.70px;letter-spacing:0.646px">42.1</div>
<div class="c" style="left:151.73px;top:462.70px;letter-spacing:0.738px">83</div>
<div class="c" style="left:234.60px;top:462.70px;letter-spacing:0.285px">DD</div>
<div class="c" style="left:299.50px;top:462.70px;letter-spacing:-0.359px">EDF</div>
<div class="c" style="left:364.00px;top:462.70px;letter-spacing:0.707px">tax claim</div>
<div class="c" style="left:475.53px;top:462.70px;letter-spacing:0.738px">83</div>
<div class="c" style="left:132.64px;top:478.70px;letter-spacing:0.665px">51.54</div>
<div class="c" style="left:234.60px;top:478.70px;letter-spacing:0.285px">DD</div>
<div class="c" style="left:299.50px;top:478.70px;letter-spacing:0.416px">Credit Card</div>
<div class="c" style="left:456.44px;top:478.70px;letter-spacing:0.665px">51.54</div>
<svg class="a" style="left:0;top:0" width="670" height="162" viewBox="0 0 670 162">
<defs>
<linearGradient id="gPaper" x1="0" y1="0" x2="1" y2="1"><stop offset="0" stop-color="#ffffff"/><stop offset="1" stop-color="#dcdcdc"/></linearGradient>
<linearGradient id="gFold" x1="0" y1="0" x2="0" y2="1"><stop offset="0" stop-color="#f9b27a"/><stop offset="0.15" stop-color="#f6a067"/><stop offset="1" stop-color="#e2481a"/></linearGradient>
<linearGradient id="gDrive" x1="0" y1="0" x2="0" y2="1"><stop offset="0" stop-color="#f4f4f4"/><stop offset="1" stop-color="#c4c4c4"/></linearGradient>
<linearGradient id="gDark" x1="0" y1="0" x2="0" y2="1"><stop offset="0" stop-color="#6a6a6a"/><stop offset="1" stop-color="#303030"/></linearGradient>
<linearGradient id="gGreen" x1="0" y1="0" x2="1" y2="1"><stop offset="0" stop-color="#e4f08c"/><stop offset="1" stop-color="#76b52a"/></linearGradient>
<linearGradient id="gGreen2" x1="0" y1="0" x2="0" y2="1"><stop offset="0" stop-color="#c4e86a"/><stop offset="1" stop-color="#82c02a"/></linearGradient>
<linearGradient id="gPrint" x1="0" y1="0" x2="0" y2="1"><stop offset="0" stop-color="#fafafa"/><stop offset="1" stop-color="#c8c8c8"/></linearGradient>
<linearGradient id="gBlueA" x1="0" y1="0" x2="0" y2="1"><stop offset="0" stop-color="#a9c6ea"/><stop offset="1" stop-color="#5e8fd0"/></linearGradient>
<linearGradient id="gBg" x1="0" y1="0" x2="1" y2="0"><stop offset="0" stop-color="#3565ad"/><stop offset="0.5" stop-color="#9ab5d8"/><stop offset="1" stop-color="#f4f6f8"/></linearGradient>
<linearGradient id="gGold" x1="0" y1="0" x2="1" y2="0"><stop offset="0" stop-color="#a8801e"/><stop offset="0.5" stop-color="#f0d27a"/><stop offset="1" stop-color="#a0781a"/></linearGradient>
<linearGradient id="gOrange" x1="0" y1="0" x2="0" y2="1"><stop offset="0" stop-color="#f8c070"/><stop offset="1" stop-color="#ee8a2a"/></linearGradient>
<linearGradient id="gBtn" x1="0" y1="0" x2="0" y2="1"><stop offset="0" stop-color="#fbfbfa"/><stop offset="1" stop-color="#e9e8e6"/></linearGradient>
<linearGradient id="gRed" x1="0" y1="0" x2="1" y2="1"><stop offset="0" stop-color="#e00010"/><stop offset="0.6" stop-color="#e83040"/><stop offset="1" stop-color="#f4a0a8"/></linearGradient>
<linearGradient id="gSlot" x1="0" y1="0" x2="0" y2="1"><stop offset="0" stop-color="#1e1e1e"/><stop offset="0.5" stop-color="#4a4a4a"/><stop offset="1" stop-color="#2a2a2a"/></linearGradient>
<radialGradient id="gLens" cx="0.4" cy="0.35" r="0.7"><stop offset="0" stop-color="#ffffff"/><stop offset="1" stop-color="#c8c8c8"/></radialGradient>
</defs>
<!-- window menu circle -->
<circle cx="18.6" cy="12.9" r="5" fill="#2b2a27"/>
<circle cx="18.6" cy="12.9" r="2.9" fill="#d9d8d4"/>
<circle cx="18.6" cy="12.9" r="1.2" fill="#c4c3bf"/>
<path d="M14,16.3 Q18.6,19.6 23.2,16.3" fill="none" stroke="#6a6964" stroke-width="0.9"/>
<!-- cursor -->
<path d="M498.6,18 V33.8 L502.1,30.4 L504.8,35 L507,34 L504.5,29.2 L508.9,28.8 Z" fill="#fafafa" stroke="#000" stroke-width="1.1" stroke-linejoin="miter"/>
<!-- grips -->
<g fill="#d0cfcb"><rect x="4" y="68" width="4" height="1"/><rect x="4" y="71" width="4" height="1"/><rect x="4" y="74" width="4" height="1"/>
<rect x="4" y="107" width="4" height="1"/><rect x="4" y="110" width="4" height="1"/><rect x="4" y="113" width="4" height="1"/></g>
<!-- separators -->
<g fill="#d6d4d0"><rect x="159" y="60" width="1" height="20"/><rect x="260" y="60" width="1" height="20"/><rect x="407" y="60" width="1" height="20"/><rect x="509" y="60" width="1" height="20"/><rect x="578" y="60" width="1" height="20"/>
<rect x="237" y="99" width="1" height="20"/><rect x="337" y="99" width="1" height="20"/><rect x="438" y="99" width="1" height="20"/><rect x="539" y="99" width="1" height="20"/><rect x="608" y="99" width="1" height="20"/>
<rect x="150" y="135" width="1" height="19"/><rect x="250" y="135" width="1" height="19"/></g>
<!-- dropdown arrows -->
<g fill="#111"><path d="M51,68 h6 l-3,3.5z"/><path d="M97.5,68 h6 l-3,3.5z"/><path d="M144.5,68 h6 l-3,3.5z"/><path d="M361.5,68.5 h6 l-3,3.5z"/><path d="M446.5,68.5 h6 l-3,3.5z"/><path d="M494,68.5 h6 l-3,3.5z"/>
<path d="M377,107 h6 l-3,3.2z"/><path d="M424,107 h6 l-3,3.2z"/></g>

<!-- NEW -->
<path d="M21.5,59.5 H33 L37.5,64 V80.5 H21.5 Z" fill="url(#gPaper)" stroke="#bdbdbd"/>
<path d="M33,59.5 V64 H37.5" fill="#e6e6e6" stroke="#bdbdbd"/>
<rect x="23.6" y="62.3" width="11" height="15" fill="#f0f0f0" stroke="#6a6a6a" stroke-width="0.9"/>
<g fill="#f08a30"><rect x="24.3" y="65" width="1.6" height="1.6"/><rect x="24.3" y="67.6" width="1.6" height="1.6"/><rect x="24.3" y="70.2" width="1.6" height="1.6"/><rect x="24.3" y="72.8" width="1.6" height="1.6"/><rect x="24.3" y="75.2" width="1.6" height="1.6"/></g>
<rect x="26.6" y="63.2" width="7.5" height="1.6" fill="#f4aa5a"/>
<g stroke="#cfcfcf" stroke-width="0.7"><path d="M26.5,66.5h7.5M26.5,69h7.5M26.5,71.5h7.5M26.5,74h7.5M30.3,65v12M26.3,63v14"/></g>
<path d="M33.2,71.2 h3.6 v3.3 h3.3 v3.6 h-3.3 v3.3 h-3.6 v-3.3 h-3.3 v-3.6 h3.3 Z" fill="url(#gGreen2)" stroke="#5a9418" stroke-width="0.9"/>
<path d="M34,72.5 h2 v3 h3" fill="none" stroke="#d8f0a0" stroke-width="0.6"/>
<!-- OPEN -->
<rect x="66.5" y="61.5" width="18" height="19" fill="#fbfbfb" stroke="#c4c4c4"/>
<rect x="68" y="63" width="2" height="1" fill="#f0a040"/>
<path d="M70.5,60.5 H81 L85.5,65 V70 H70.5 Z" fill="#f6f6f6" stroke="#9a9a9a"/>
<path d="M81,60.5 V65 H85.5" fill="#e4e4e4" stroke="#9a9a9a"/>
<path d="M67.5,68.5 H88 L87.6,79.5 Q87.5,80.8 86,80.8 H67.5 Z" fill="url(#gFold)" stroke="#d9501c" stroke-width="0.6"/>

<!-- SAVE -->
<path d="M115,59.5 H132.5 Q134,59.5 134.2,61 L135,77 V79 Q135,80.6 133.4,80.6 H114.1 Q112.5,80.6 112.5,79 V77 L113.3,61 Q113.5,59.5 115,59.5 Z" fill="url(#gDrive)" stroke="#8f8f8f" stroke-width="0.9"/>
<path d="M115,72 Q123.8,75.5 132.5,72" fill="none" stroke="#d0d0d0" stroke-width="0.8"/>
<path d="M112.9,76.2 H134.6 V79 Q134.6,80.3 133.2,80.3 H114.3 Q112.9,80.3 112.9,79 Z" fill="url(#gDark)"/>
<rect x="114" y="76.4" width="19.5" height="0.7" fill="#8a8a8a"/>
<path d="M121,60.3 H127 V66 H130.3 L124,73 L117.7,66 H121 Z" fill="url(#gGreen)" stroke="#55a01c" stroke-width="0.9" stroke-linejoin="round"/>
<!-- PDF -->
<rect x="171.6" y="61.6" width="15.8" height="17.8" fill="#fff" stroke="#7c7c7c" stroke-width="1.2"/>
<path d="M176,62.5 L186.6,62.5 L186.6,73 Z" fill="#e4e4e4"/>
<path d="M172.5,63.2 L175.5,62.8 C178.5,65.5 181.5,68.5 184.2,72.8 L182.3,73.4 C179.5,70 176.2,66.8 172.5,64.8 Z" fill="url(#gRed)"/>
<path d="M174.5,64.2 C177,64.3 179.5,63.8 181.8,62.6" stroke="#e83030" stroke-width="0.8" fill="none"/>
<text x="174.6" y="77.8" font-family="Liberation Sans" font-weight="bold" font-size="4.9" fill="#111" letter-spacing="0.45">PDF</text>
<!-- PRINT -->
<g transform="translate(0 0)">
<rect x="203.5" y="64" width="14" height="7" fill="#3a3a3a"/>
<rect x="204.5" y="60.5" width="12" height="10" fill="#f6f6f6" stroke="#a0a0a0" stroke-width="0.8"/>
<rect x="200.5" y="69.8" width="20" height="8.2" rx="2" fill="url(#gPrint)" stroke="#5a5a5a"/>
<rect x="203.2" y="69.8" width="14.6" height="5.6" fill="url(#gSlot)"/>
<path d="M202.3,77.8 V80.2 Q202.3,80.8 203,80.8 H218 Q218.7,80.8 218.7,80.2 V77.8" fill="#f4f4f4" stroke="#333" stroke-width="0.9"/>
<rect x="217.6" y="75.3" width="1.4" height="1" fill="#7ad060"/>
</g>
<path d="M208.8,62.5 h3.4 v2.6 h2 l-3.7,3.2 l-3.7,-3.2 h2z" fill="#a8a8a8"/>
<!-- PRINT PREVIEW -->
<g transform="translate(31 0)">
<rect x="203.5" y="64" width="14" height="7" fill="#3a3a3a"/>
<rect x="204.5" y="60.5" width="12" height="10" fill="#f6f6f6" stroke="#a0a0a0" stroke-width="0.8"/>
<rect x="200.5" y="69.8" width="20" height="8.2" rx="2" fill="url(#gPrint)" stroke="#5a5a5a"/>
<rect x="203.2" y="69.8" width="14.6" height="5.6" fill="url(#gSlot)"/>
<path d="M202.3,77.8 V80.2 Q202.3,80.8 203,80.8 H218 Q218.7,80.8 218.7,80.2 V77.8" fill="#f4f4f4" stroke="#333" stroke-width="0.9"/>
<rect x="217.6" y="75.3" width="1.4" height="1" fill="#7ad060"/>
</g>
<path d="M239.5,69.5 L245,74.8" stroke="#2a2a2a" stroke-width="1.8" stroke-linecap="round"/>
<circle cx="236.8" cy="66.2" r="4.3" fill="url(#gLens)" stroke="#333" stroke-width="1.2"/>
<!-- SCISSORS -->
<path d="M274.6,60.3 L281.2,72.3 M285.2,60.3 L278.6,72.3" stroke="#7a7a7a" stroke-width="2.3" fill="none" stroke-linecap="round"/>
<path d="M274.8,61 L281,72 M285,61 L278.8,72" stroke="#f4f4f4" stroke-width="0.9" fill="none"/>
<ellipse cx="275.7" cy="76.4" rx="2.9" ry="4.3" transform="rotate(28 275.7 76.4)" fill="none" stroke="#cf3a3a" stroke-width="1.9"/>
<ellipse cx="284.3" cy="76.4" rx="2.9" ry="4.3" transform="rotate(-28 284.3 76.4)" fill="none" stroke="#cf3a3a" stroke-width="1.9"/>
<path d="M278.5,72.5 L281.5,72.5" stroke="#c83030" stroke-width="1.6"/>
<!-- COPY -->
<rect x="301.5" y="60.5" width="12.5" height="14" fill="url(#gPaper)" stroke="#7c7c7c"/>
<g stroke="#8c8c8c" stroke-width="0.8"><path d="M303,62.5h9M303,65h9M303,67.5h9M303,70h4"/></g>
<rect x="307.5" y="66.5" width="12.5" height="14" fill="url(#gPaper)" stroke="#7c7c7c"/>
<g stroke="#8c8c8c" stroke-width="0.8"><path d="M309,68.5h9M309,71h5M309,73.5h9M309,76h8"/></g>

<!-- PASTE disabled -->
<rect x="331.5" y="62" width="12.5" height="14.5" fill="#d8d8d8" stroke="#c8c8c8"/>
<rect x="335.5" y="60" width="4" height="3.5" fill="#cfcfcf" stroke="#bdbdbd" stroke-width="0.7"/>
<rect x="337.5" y="66" width="12.5" height="14.5" fill="#ececec" stroke="#c6c6c6"/>
<g stroke="#cdcdcd" stroke-width="0.8"><path d="M339,68.5h9M339,71h5M339,73.5h9M339,76h8"/></g>

<!-- CLONE brush -->
<path d="M389.5,69 C389,66.5 389.3,64.5 390,63 C390.6,61 393.8,61 394.2,63 C394.9,64.5 395.2,66.5 394.6,69 Z" fill="url(#gGold)" stroke="#7a5a10" stroke-width="0.5"/>
<rect x="386.5" y="68.2" width="10.5" height="2.6" rx="0.8" fill="url(#gGold)" stroke="#7a5a10" stroke-width="0.4"/>
<rect x="386.8" y="70.8" width="10" height="1.2" fill="#d8d8d8"/>
<rect x="386.8" y="72" width="10" height="5.5" fill="#151515"/>
<path d="M387,74.5 h9.8 v3 h-9.8z" fill="#c8202a" opacity="0.85"/>
<path d="M378.5,80.5 C381,78.5 385,77.5 387.5,77 L396.5,77 L392,79 C388,80 383,80.8 378.5,80.8 Z" fill="#e0141e"/>

<!-- UNDO -->
<path d="M415.5,69 L425.5,61 V66 C430,66 434.5,69 435,75 C432.5,72.5 429.5,72 425.5,72 V77 Z" fill="#d6d6d6" stroke="#cbcbcb" stroke-width="0.6"/>
<!-- REDO -->
<path d="M483.5,69 L473.5,61 V66 C469,66 464.5,69 464,75 C466.5,72.5 469.5,72 473.5,72 V77 Z" fill="#d6d6d6" stroke="#cbcbcb" stroke-width="0.6"/>

<!-- FIND -->
<circle cx="525.8" cy="67.3" r="5.6" fill="#f6f6f6" stroke="#2f2f2f" stroke-width="1.3"/>
<path d="M531.5,73 L537,78.5" stroke="#333" stroke-width="2.6" stroke-linecap="round"/>
<path d="M527,79.5 L537.8,68.8" stroke="#2c2c2c" stroke-width="3.4"/>
<path d="M536.5,70 L539.5,67" stroke="#e070d0" stroke-width="3.6"/>
<path d="M524.5,81 L526,77.5 L529,80 Z" fill="#f0e070" stroke="#b0a030" stroke-width="0.5"/>
<circle cx="525.2" cy="80.6" r="0.9" fill="#222"/>

<!-- SPELL -->
<text x="549" y="68.2" font-family="Liberation Sans" font-weight="bold" font-size="7.6" fill="#000" stroke="#000" stroke-width="0.35" letter-spacing="0.15">ABC</text>
<path d="M557,73.6 L560.8,77.6 L569.8,70.4" fill="none" stroke="#3a62a6" stroke-width="3.6" stroke-linejoin="round" stroke-linecap="round"/>
<path d="M557,73.6 L560.8,77.6 L569.8,70.4" fill="none" stroke="#8fb4e6" stroke-width="1.6" stroke-linejoin="round" stroke-linecap="round"/>

<!-- INSERT ROWS -->
<rect x="587.5" y="60.5" width="23.5" height="20" fill="#f4f6f8" stroke="#8d9094"/>
<rect x="588" y="60.8" width="22.5" height="4.4" fill="#3f9c12"/>
<g fill="#6fdc22"><rect x="588.8" y="61.6" width="4.5" height="2.6"/><rect x="594.5" y="61.6" width="4.5" height="2.6"/><rect x="600.2" y="61.6" width="4.5" height="2.6"/><rect x="605.8" y="61.6" width="4.3" height="2.6"/></g>
<g stroke="#c3c9d0" stroke-width="1"><path d="M588,69.5h22.5M588,73.5h22.5M588,77.5h22.5M593.8,65v15.5M599.5,65v15.5M605.2,65v15.5"/></g>
<!-- INSERT COLS -->
<rect x="620.5" y="60.5" width="23.5" height="20" fill="#f4f6f8" stroke="#8d9094"/>
<rect x="620.8" y="61" width="5.2" height="19" fill="#3f9c12"/>
<g fill="#6fdc22"><rect x="621.6" y="61.6" width="3.8" height="2.6"/><rect x="621.6" y="65.6" width="3.8" height="2.6"/><rect x="621.6" y="69.6" width="3.8" height="2.6"/><rect x="621.6" y="73.6" width="3.8" height="2.6"/><rect x="621.6" y="77.2" width="3.8" height="2.6"/></g>
<g stroke="#c3c9d0" stroke-width="1"><path d="M626,65h17.5M626,69h17.5M626,73h17.5M626,77h17.5M631.5,61v19M637,61v19"/></g>
<!-- DELETE ROWS -->
<rect x="653.5" y="60.5" width="20" height="19" fill="#eef0f2" stroke="#8d9094"/>
<g stroke="#c8cdd2" stroke-width="1"><path d="M659,61v18M664,61v18"/></g>
<rect x="654" y="65" width="20" height="4.5" fill="#f8d8d0" stroke="#e05030" stroke-width="1"/>
<rect x="663" y="71" width="7" height="6" rx="1.5" fill="#e03a2a"/>
<path d="M664.5,72.5 l4,3 M668.5,72.5 l-4,3" stroke="#fff" stroke-width="1"/>

<!-- ===== TOOLBAR 2 ===== -->
<!-- font name box -->
<rect x="15.5" y="97.5" width="145" height="23" rx="3.5" fill="#fff" stroke="#b3b1ac"/>
<path d="M142.5,98 H157 Q160,98 160,101 V117 Q160,120 157,120 H142.5 Z" fill="url(#gBtn)"/>
<rect x="142" y="98" width="1" height="22" fill="#cfcdc9"/>
<path d="M148,108.5 h7 l-3.5,4z" fill="#777"/>
<!-- size box -->
<rect x="171.5" y="97.5" width="61" height="23" rx="3.5" fill="#fff" stroke="#b3b1ac"/>
<path d="M212.5,98 H229 Q232,98 232,101 V117 Q232,120 229,120 H212.5 Z" fill="url(#gBtn)"/>
<rect x="212" y="98" width="1" height="22" fill="#cfcdc9"/>
<path d="M219.5,108.5 h7 l-3.5,4z" fill="#777"/>

<!-- Bold A -->
<path d="M247.5,114.5 L252.8,101.5 H258.6 L264,114.5 H259.8 L258.8,111.6 H252.6 L251.6,114.5 Z M253.8,108.6 H257.6 L255.7,103.6 Z" fill="url(#gBlueA)" stroke="#3a62a8" stroke-width="1" fill-rule="evenodd"/>
<!-- Italic A -->
<path d="M278.8,114.5 L289.5,101.5 H294.5 L294.6,114.5 H291.4 L291.3,111.8 H286.2 L283.6,114.5 Z M288,109 H291.3 L291.4,104.2 Z" fill="url(#gBlueA)" stroke="#3a62a8" stroke-width="1" fill-rule="evenodd"/>
<!-- Underline A -->
<path d="M310.5,113 L315.2,100.5 H320.4 L325.2,113 H321.8 L320.9,110.4 H314.8 L313.9,113 Z M315.8,107.6 H319.8 L317.8,102.6 Z" fill="url(#gBlueA)" stroke="#3a62a8" stroke-width="1" fill-rule="evenodd"/>
<rect x="309.5" y="115.8" width="17" height="2.6" fill="#5a86c8" stroke="#3a62a8" stroke-width="0.6"/>

<!-- Font color -->
<rect x="344.3" y="114.3" width="22.6" height="5.8" fill="#800000"/>
<circle cx="349" cy="102.2" r="3.4" fill="#e22a2a" stroke="#b01818" stroke-width="0.6"/>
<circle cx="348.8" cy="107.6" r="3.3" fill="#5ad22a" stroke="#3a9a18" stroke-width="0.6"/>
<circle cx="353.8" cy="105.3" r="3.3" fill="#5a8ad8" stroke="#2a5aa8" stroke-width="0.6"/>
<text x="354.2" y="114.6" font-family="Liberation Sans" font-weight="bold" font-size="15" fill="#f2f6fc" stroke="#2a5aa8" stroke-width="1.4" paint-order="stroke" transform="translate(354.2 0) scale(1.12 1) translate(-354.2 0)">a</text>


<!-- Background color -->
<rect x="391.8" y="98.5" width="21" height="16" fill="url(#gBg)" stroke="#4a6fa8" stroke-width="0.8"/>
<g stroke="#1e1e1e" stroke-width="1"><path d="M397,101.5h8.5M397,104h4.5M397,106.5h8.5M397,109h6M397,111.5h8.5"/></g>
<rect x="391.2" y="114.3" width="22.6" height="5.8" fill="#ffff00"/>

<!-- Align left/center/right -->
<g fill="#fff" stroke="#999" stroke-width="1.6">
<rect x="447.8" y="98.8" width="19.8" height="19" rx="1"/><rect x="478.8" y="98.8" width="19.8" height="19" rx="1"/><rect x="509.8" y="98.8" width="19.8" height="19" rx="1"/></g>
<g stroke="#7e7e7e" stroke-width="0.9">
<path d="M450.5,101.5h13M450.5,103.5h9M450.5,105.5h8M450.5,107.5h11M450.5,109.5h13M450.5,111.5h6M450.5,113.5h9M450.5,115.5h10"/>
<path d="M481.5,101.5h13M483.5,103.5h9M484,105.5h8M482.5,107.5h11M481.5,109.5h13M485,111.5h6M483.5,113.5h9M483,115.5h10"/>
<path d="M513,101.5h13M517,103.5h9M518,105.5h8M515,107.5h11M513,109.5h13M520,111.5h6M517,113.5h9M516,115.5h10"/>
</g>

<!-- Wrap -->
<g stroke="#3c3c3c" stroke-width="2.6" stroke-linecap="round"><path d="M549.5,101.5h16M549.5,108.3h12.5M549.5,115h5"/></g>
<path d="M566,107.5 Q568,107.5 568,109.5 V114 Q568,116 566,116 H561" fill="none" stroke="#d87a18" stroke-width="2.8" stroke-linecap="round"/>
<path d="M566,107.5 Q568,107.5 568,109.5 V114 Q568,116 566,116 H561" fill="none" stroke="#f8c070" stroke-width="1.1" stroke-linecap="round"/>
<path d="M557,115.8 L561.5,112 V119.5 Z" fill="#f0a040" stroke="#d87a18" stroke-width="0.8"/>

<!-- Merge disabled -->
<rect x="581.5" y="100.5" width="17.5" height="17.5" fill="#f6f6f6" stroke="#cfcfcf"/>
<g stroke="#d6d6d6" stroke-width="1"><path d="M581.5,106.5h17.5M581.5,112.5h17.5M587.2,100.5v6M593.2,100.5v6M587.2,112.5v5.5M593.2,112.5v5.5"/></g>
<path d="M584,109.5h12.5M584,109.5l2,-2M584,109.5l2,2M596.5,109.5l-2,-2M596.5,109.5l-2,2" stroke="#c8c8c8" stroke-width="0.9" fill="none"/>

<!-- align top -->
<rect x="620.5" y="98.5" width="14" height="9.8" rx="2" fill="#f2f2f2" stroke="#8a8a8a" stroke-width="1.3"/>
<path d="M627.4,110 L630,114.5 H628.2 V119 H626.6 V114.5 H624.8 Z" fill="#2a5aa8"/>
<!-- align center -->
<rect x="651.3" y="104.5" width="14.2" height="8" rx="2" fill="#f4f4f4" stroke="#8a8a8a" stroke-width="1.3"/>
<path d="M658.3,104 L661,100 H659.1 V97.5 H657.5 V100 H655.6 Z" fill="#2a5aa8"/>
<path d="M658.3,113 L661,117 H659.1 V119.7 H657.5 V117 H655.6 Z" fill="#2a5aa8"/>

<!-- ===== FORMULA BAR ===== -->
<path d="M133,143.8 h7 l-3.5,4.2z" fill="#777"/>
<text x="158.8" y="148.6" font-family="Liberation Serif" font-style="italic" font-weight="bold" font-size="17" fill="#111">f</text>
<text x="166.8" y="148.4" font-family="Liberation Serif" font-style="italic" font-size="10.4" fill="#3a3a3a" font-weight="bold">(x)</text>
<text x="191.6" y="152.3" font-family="Liberation Serif" font-weight="bold" font-size="23" fill="#000" transform="translate(191.6 0) scale(1.08 1) translate(-191.6 0)">Σ</text>
<rect x="224.2" y="140.8" width="15.2" height="2.6" fill="#111"/>
<rect x="224.2" y="145.5" width="15.2" height="2.6" fill="#111"/>
</svg>

<div class="mn" style="left:21.5px;top:110.59px;color:#2a2a2a;font-size:13.6px;font-style:italic;letter-spacing:-0.15px">Tahoma</div>
<div class="mn" style="left:177px;top:109.59px;color:#2a2a2a;font-size:13.6px;letter-spacing:0.6px">10</div>
</div></body></html>
